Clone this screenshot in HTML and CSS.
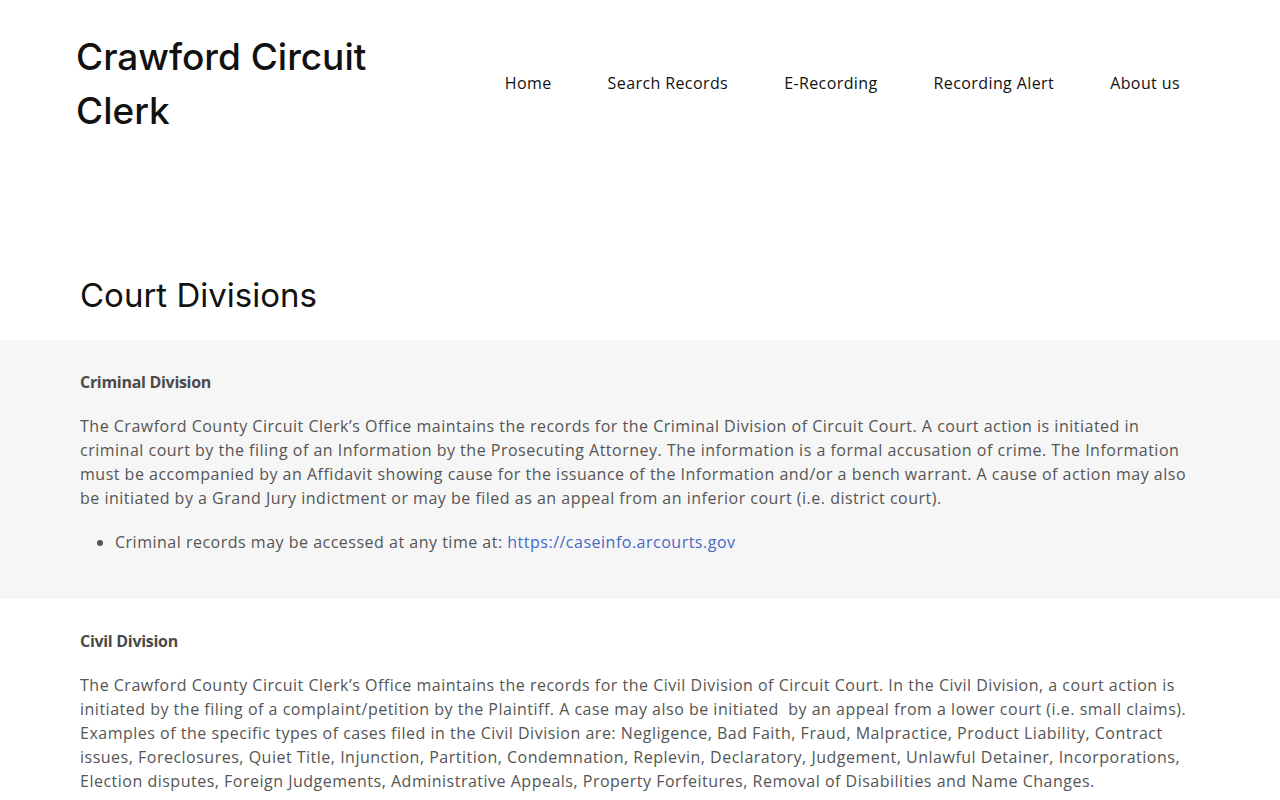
FILE: index.html
```html
<!DOCTYPE html>
<html lang="en">
<head>
<meta charset="utf-8">
<title>Court Divisions - Crawford Circuit Clerk</title>
<link rel="stylesheet" href="styles.css">
</head>
<body>
<header class="site-header">
  <div class="brand">Crawford Circuit Clerk</div>
  <nav class="main-nav">
    <a href="#">Home</a>
    <a href="#">Search Records</a>
    <a href="#">E-Recording</a>
    <a href="#">Recording Alert</a>
    <a href="#">About us</a>
  </nav>
</header>
<main>
  <div class="page-title-wrap">
    <h1 class="page-title">Court Divisions</h1>
  </div>
  <section class="division division-alt">
    <div class="inner">
      <h2 class="division-title">Criminal Division</h2>
      <p>The Crawford County Circuit Clerk’s Office maintains the records for the Criminal Division of Circuit Court. A court action is initiated in criminal court by the filing of an Information by the Prosecuting Attorney. The information is a formal accusation of crime. The Information must be accompanied by an Affidavit showing cause for the issuance of the Information and/or a bench warrant. A cause of action may also be initiated by a Grand Jury indictment or may be filed as an appeal from an inferior court (i.e. district court).</p>
      <ul>
        <li>Criminal records may be accessed at any time at: <a href="#">https://caseinfo.arcourts.gov</a></li>
      </ul>
    </div>
  </section>
  <section class="division">
    <div class="inner">
      <h2 class="division-title">Civil Division</h2>
      <p>The Crawford County Circuit Clerk’s Office maintains the records for the Civil Division of Circuit Court. In the Civil Division, a court action is initiated by the filing of a complaint/petition by the Plaintiff. A case may also be initiated &nbsp;by an appeal from a lower court (i.e. small claims). Examples of the specific types of cases filed in the Civil Division are: Negligence, Bad Faith, Fraud, Malpractice, Product Liability, Contract issues, Foreclosures, Quiet Title, Injunction, Partition, Condemnation, Replevin, Declaratory, Judgement, Unlawful Detainer, Incorporations, Election disputes, Foreign Judgements, Administrative Appeals, Property Forfeitures, Removal of Disabilities and Name Changes.</p>
    </div>
  </section>
</main>
</body>
</html>
```
FILE: styles.css
```css
* { box-sizing: border-box; }
html, body { margin: 0; padding: 0; background: #fff; }
body {
  font-family: "Open Sans", "Liberation Sans", sans-serif;
  color: #555;
  font-size: 16px;
  line-height: 24px;
  letter-spacing: 0.5px;
}
.site-header {
  display: flex;
  justify-content: space-between;
  align-items: flex-start;
  padding: 30px 100px 0 76px;
  height: 165px;
}
.brand {
  font-family: "Inter", "Liberation Sans", sans-serif;
  font-size: 37px;
  line-height: 54px;
  font-weight: 500;
  letter-spacing: 0;
  color: #111;
  width: 330px;
}
.main-nav {
  display: flex;
  gap: 56px;
  padding-top: 41px;
}
.main-nav a {
  color: #111;
  text-decoration: none;
  font-size: 16px;
  line-height: 24px;
  letter-spacing: 0.4px;
}
.page-title-wrap {
  padding: 110px 80px 0;
  height: 175px;
}
.page-title {
  margin: 0;
  font-family: "Inter", "Liberation Sans", sans-serif;
  font-weight: 400;
  font-size: 33px;
  line-height: 40px;
  letter-spacing: 0;
  color: #111;
}
.division { padding: 30px 0 45px; }
.division-alt { background: #f6f6f6; }
.inner { padding: 0 80px; }
.division-title {
  margin: 0 0 20px;
  font-size: 16px;
  line-height: 24px;
  font-weight: 700;
  letter-spacing: -0.3px;
  color: #4a4a4a;
}
.division p { margin: 0 0 20px; }
.division ul { margin: 0; padding-left: 35px; }
.division a { color: #4668c6; text-decoration: none; }
```
